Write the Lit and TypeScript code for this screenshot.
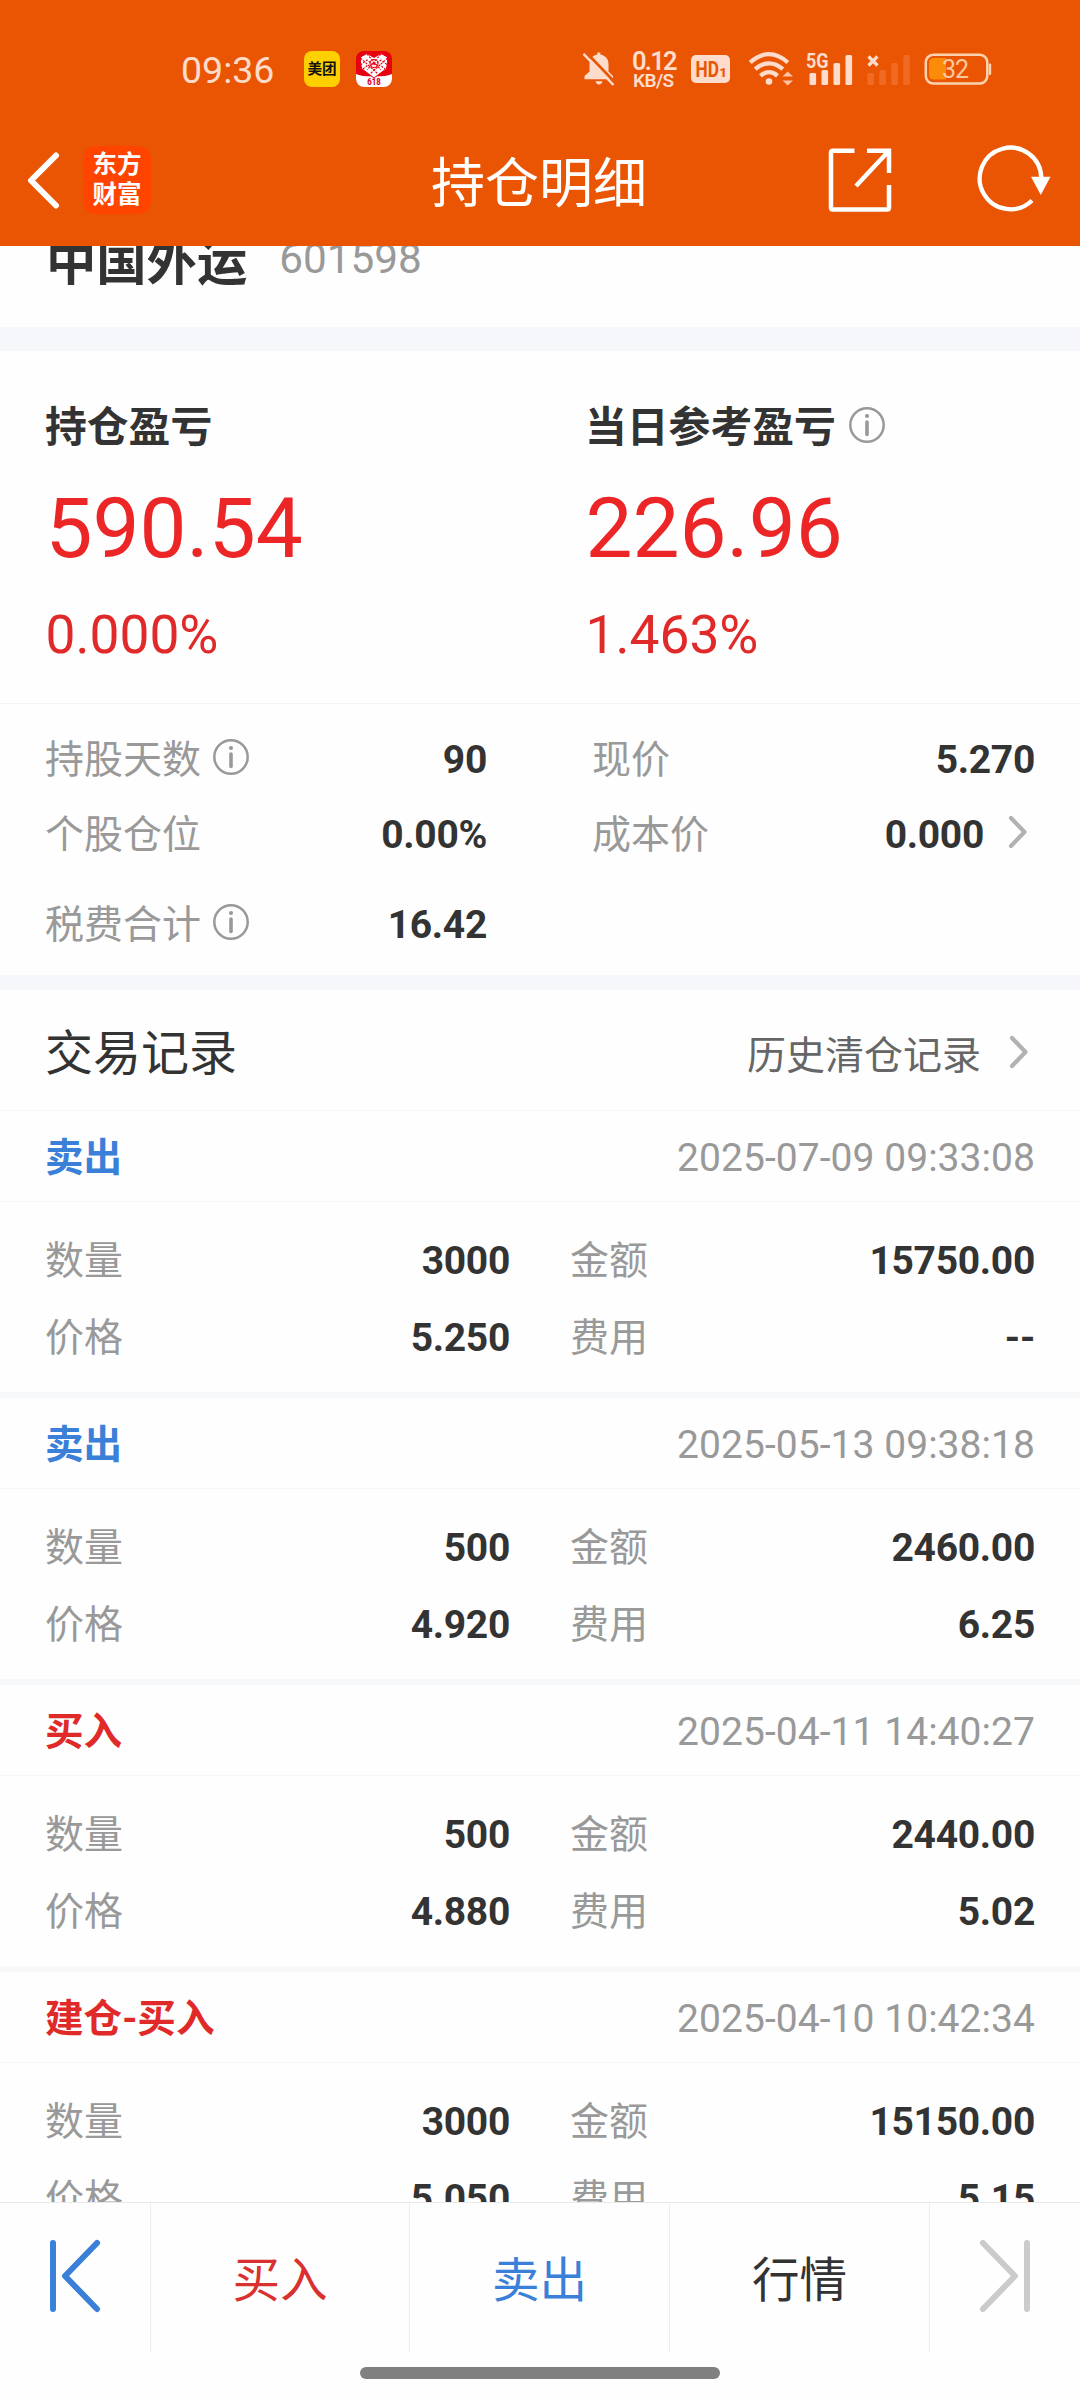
import { LitElement, html, css, svg, nothing } from "lit";
import { customElement, property } from "lit/decorators.js";

interface Trade {
  side: "buy" | "sell";
  label: string;
  time: string;
  quantity: string;
  amount: string;
  price: string;
  fee: string;
}

const TRADES: Trade[] = [
  { side: "sell", label: "卖出", time: "2025-07-09 09:33:08", quantity: "3000", amount: "15750.00", price: "5.250", fee: "--" },
  { side: "sell", label: "卖出", time: "2025-05-13 09:38:18", quantity: "500", amount: "2460.00", price: "4.920", fee: "6.25" },
  { side: "buy", label: "买入", time: "2025-04-11 14:40:27", quantity: "500", amount: "2440.00", price: "4.880", fee: "5.02" },
  { side: "buy", label: "建仓-买入", time: "2025-04-10 10:42:34", quantity: "3000", amount: "15150.00", price: "5.050", fee: "5.15" },
];

const infoIcon = html`<svg class="info" width="36" height="36" viewBox="0 0 36 36">
  <circle cx="18" cy="18" r="16.7" fill="none" stroke="#999" stroke-width="2.5" />
  <circle cx="18" cy="9" r="2.1" fill="#999" />
  <path d="M18 15V27.5" stroke="#999" stroke-width="3.6" stroke-linecap="round" />
</svg>`;

const chevron = html`<svg class="chevron" width="20" height="34" viewBox="0 0 20 34">
  <path d="M3 3L16.5 17L3 31" fill="none" stroke="#b2b2b2" stroke-width="4.2" stroke-linecap="round" stroke-linejoin="round" />
</svg>`;

@customElement("status-bar")
export class StatusBar extends LitElement {
  static styles = css`
    :host {
      display: flex;
      align-items: center;
      height: 112px;
      padding: 26px 88px 0 181px;
      box-sizing: border-box;
      color: #fddccb;
      font-family: Roboto, "Noto Sans CJK SC", sans-serif;
    }
    svg { display: block; flex: none; }
    .time { font-size: 37.5px; line-height: 40px; width: 93px; white-space: nowrap; padding-top: 1px; }
    .app { margin-left: 30px; }
    .app2 { margin-left: 16px; }
    .bell { margin-left: auto; }
    .speed {
      width: 43px;
      margin-left: 17px;
      font-weight: 600;
      padding-top: 4px;
      white-space: nowrap;
    }
    .rate { font-size: 25.5px; line-height: 20px; letter-spacing: -1.8px; margin-left: -1px; }
    .unit { font-size: 19px; line-height: 20px; letter-spacing: -0.6px; }
    .hd { margin-left: 15px; }
    .wifi { margin-left: 18px; }
    .sig { margin-left: 13px; }
    .sig2 { margin-left: 14px; }
    .bat { margin-left: 13px; }
  `;

  private bars(x: number) {
    return [18, 15, 8, 0].map((top, i) => svg`<rect x=${x + i * 12} y=${top + 3} width="6.6" height=${30 - top} rx="1.5" />`);
  }

  render() {
    return html`
      <div class="time">09:36</div>
      <svg class="app" width="36" height="36" viewBox="0 0 36 36">
        <rect width="36" height="36" rx="8" fill="#ffd000" />
        <text x="18" y="23.4" text-anchor="middle" font-size="14.6" font-weight="700" fill="#111" font-family="'Noto Sans CJK SC', sans-serif">美团</text>
      </svg>
      <svg class="app2" width="36" height="36" viewBox="0 0 36 36">
        <rect width="36" height="36" rx="8" fill="#e60012" />
        <path d="M0 23Q5 25.500 18 25.500Q31 25.500 36 23V28A8 8 0 0 1 28 36H8A8 8 0 0 1 0 28Z" fill="#fff" />
        <path d="M18 27L5.500 17.500Q4 12 4.500 6L11 2.500L18 6.500L25 2.500L31.500 6Q32 12 30.500 17.500Z" fill="#fff" stroke="#e60012" stroke-width="1" />
        <g fill="none" stroke="#e60012" stroke-width="1.100">
          <path d="M11 3L25 19M25 3L11 19M4.500 7L22 23M31.500 7L14 23M4.500 14L11 9L18 14L25 9L31.500 14M7 18L12 14L18 19L24 14L29 18" stroke-dasharray="2.200 1.200" />
          <circle cx="18" cy="12.500" r="4" />
        </g>
        <circle cx="18" cy="12.500" r="1.300" fill="#e60012" />
        <text x="18" y="34.200" text-anchor="middle" font-size="9.200" font-weight="800" fill="#d9001b" textLength="13.500" lengthAdjust="spacingAndGlyphs" font-family="Roboto, sans-serif">618</text>
      </svg>

      <svg class="bell" width="34" height="36" viewBox="0 0 34 36">
        <path d="M15.300 3.500V1.600H18.300V3.500C23.500 4.500 26.500 8 26.500 13V20.500L31 25V28.300H2.500V25L7.500 20.500V13C7.500 8 10.300 4.500 15.300 3.500Z" fill="#fddccb" />
        <path d="M13.500 30.300H20.500Q19.500 33.500 17 33.500Q14.500 33.500 13.500 30.300Z" fill="#fddccb" />
        <path d="M3.800 1L34 32.500" stroke="#ea5504" stroke-width="2.600" />
        <path d="M1.500 2.800L31.500 34" stroke="#fddccb" stroke-width="2.500" />
      </svg>
      <div class="speed"><div class="rate">0.12</div><div class="unit">KB/S</div></div>
      <svg class="hd" width="39" height="28" viewBox="0 0 39 28">
        <rect width="39" height="28" rx="5" fill="#fddccb" />
        <text x="4.500" y="22" font-size="22" font-weight="700" fill="#ea5504" textLength="23.500" lengthAdjust="spacingAndGlyphs" font-family="Roboto, sans-serif">HD</text>
        <text x="28.300" y="22" font-size="13.500" font-weight="800" fill="#ea5504" font-family="Roboto, sans-serif">1</text>
      </svg>
      <svg class="wifi" width="45" height="36" viewBox="0 0 45 36">
        <g fill="none" stroke="#fddccb" stroke-width="4.300">
          <path d="M2.200 11.500Q11.500 3.200 21 3.200Q30.500 3.200 39.800 11.500" />
          <path d="M7.200 18.200Q13.800 12.300 21 12.300Q28.200 12.300 34.800 18.200" />
          <path d="M12.500 24.800Q16.500 21.200 21 21.200Q25.500 21.200 29.500 24.800" />
        </g>
        <circle cx="21" cy="30.500" r="3.300" fill="#fddccb" />
        <path d="M34.500 25.500L39.700 20.500L45 25.500ZM34.500 29.500L39.700 34.500L45 29.500Z" fill="#fcc3a6" />
      </svg>
      <svg class="sig" width="47" height="34" viewBox="0 0 47 34">
        <text x="0" y="15.800" font-size="20" font-weight="700" fill="#fddccb" textLength="22.500" lengthAdjust="spacingAndGlyphs" font-family="Roboto, sans-serif">5G</text>
        <g fill="#fddccb">${this.bars(3.5)}</g>
      </svg>
      <svg class="sig2" width="44" height="34" viewBox="0 0 44 34">
        <path d="M1.500 4.500L10.500 13.500M10.500 4.500L1.500 13.500" stroke="#fddccb" stroke-width="3.200" />
        <g fill="#f16a23">${this.bars(0.3)}</g>
      </svg>
      <svg class="bat" width="68" height="34" viewBox="0 0 68 34">
        <rect x="1.800" y="2.800" width="61.500" height="28.800" rx="7.500" fill="none" stroke="#fcd3ae" stroke-width="2.500" />
        <path d="M5 11Q5 6 10 6H22V27.500H10Q5 27.500 5 23Z" fill="#fa8c0a" />
        <rect x="64.800" y="11.500" width="2.400" height="11.500" rx="1.200" fill="#fcd3ae" />
        <text x="31.500" y="26.200" text-anchor="middle" font-size="25" fill="#fcc99f" textLength="27" font-family="Roboto, sans-serif">32</text>
      </svg>
    `;
  }
}

@customElement("nav-bar")
export class NavBar extends LitElement {
  static styles = css`
    :host {
      display: grid;
      grid-template-columns: 1fr auto 1fr;
      align-items: center;
      height: 134px;
      padding: 0 28px 0 26px;
      color: #fff;
      font-family: Roboto, "Noto Sans CJK SC", sans-serif;
    }
    svg { display: block; }
    .left { display: flex; align-items: center; gap: 23px; padding-top: 1px; }
    .logo {
      width: 68px;
      height: 68px;
      border-radius: 13px;
      background: #ff4400;
      display: flex;
      flex-direction: column;
      align-items: center;
      justify-content: center;
      font: 700 24.5px/30px "Noto Sans CJK SC", sans-serif;
      box-sizing: border-box;
      padding-bottom: 3px;
    }
    .title { font-size: 54px; line-height: 60px; padding-top: 12px; }
    .right { display: flex; justify-content: flex-end; align-items: center; gap: 85px; padding-top: 1px; }
  `;

  render() {
    return html`
      <div class="left">
        <svg width="34" height="60" viewBox="0 0 34 60">
          <path d="M30 5.500L5 30.500L30 55.500" fill="none" stroke="#fff" stroke-width="6" stroke-linecap="round" stroke-linejoin="round" />
        </svg>
        <div class="logo"><span>东方</span><span>财富</span></div>
      </div>
      <div class="title">持仓明细</div>
      <div class="right">
        <svg width="64" height="66" viewBox="0 0 64 66" fill="none" stroke="#fff" stroke-width="4.500">
          <path d="M26.500 3.800H5Q3 3.800 3 5.800V60.500Q3 62.500 5 62.500H59Q61 62.500 61 60.500V38" />
          <path d="M39 3.800H61V26M60 4.800L28 39" />
        </svg>
        <svg width="75" height="70" viewBox="0 0 75 70">
          <path d="M55 55.500A30.800 30.800 0 1 1 64.300 33" fill="none" stroke="#fff" stroke-width="4.300" />
          <path d="M54 31.800H73.500L63.800 50Z" fill="#fff" />
        </svg>
      </div>
    `;
  }
}

@customElement("stat-row")
export class StatRow extends LitElement {
  static styles = css`
    :host {
      display: flex;
      align-items: center;
      height: 50px;
      font-size: 39px;
      line-height: 50px;
      white-space: nowrap;
    }
    svg { display: block; }
    .label { color: #999; }
    .info { margin: -6px 0 0 12px; }
    .value { margin-left: auto; color: #333; font-weight: 700; letter-spacing: -0.3px; }
    .chevron { margin: -6px 7px 0 24px; }
  `;
  @property() label = "";
  @property() value = "";
  @property({ type: Boolean }) info = false;
  @property({ type: Boolean }) more = false;

  render() {
    return html`
      <span class="label">${this.label}</span>
      ${this.info ? infoIcon : nothing}
      <span class="value">${this.value}</span>
      ${this.more ? chevron : nothing}
    `;
  }
}

@customElement("trade-record")
export class TradeRecord extends LitElement {
  static styles = css`
    :host { display: block; height: 281px; border-bottom: 6px solid #f6f8fa; }
    .head {
      display: flex;
      justify-content: space-between;
      align-items: center;
      height: 91px;
      padding: 3px 45px 0;
      box-sizing: border-box;
      border-bottom: 1px solid #f5f6f8;
      font-size: 39px;
      line-height: 50px;
    }
    .side { font-weight: 700; font-size: 38.6px; padding-top: 1px; }
    .buy { color: #e02a2a; }
    .sell { color: #3a80d9; }
    .time { color: #999; letter-spacing: 0.05px; }
    .body {
      display: grid;
      grid-template-columns: 465px 465px;
      column-gap: 60px;
      row-gap: 27px;
      padding: 34px 45px 0;
    }
  `;
  @property({ attribute: false }) trade!: Trade;

  render() {
    const t = this.trade;
    return html`
      <div class="head">
        <span class="side ${t.side}">${t.label}</span>
        <span class="time">${t.time}</span>
      </div>
      <div class="body">
        <stat-row label="数量" value=${t.quantity}></stat-row>
        <stat-row label="金额" value=${t.amount}></stat-row>
        <stat-row label="价格" value=${t.price}></stat-row>
        <stat-row label="费用" value=${t.fee}></stat-row>
      </div>
    `;
  }
}

@customElement("app-root")
export class AppRoot extends LitElement {
  static styles = css`
    :host {
      display: flex;
      flex-direction: column;
      width: 1080px;
      height: 2400px;
      overflow: hidden;
      background: #fefefe;
      color: #333;
      font-family: Roboto, "Noto Sans CJK SC", sans-serif;
    }
    svg { display: block; flex: none; }
    header { background: #ea5504; height: 246px; flex: none; }
    main { flex: 1; min-height: 0; overflow: hidden; }
    .stock {
      display: flex;
      align-items: center;
      gap: 32px;
      height: 130px;
      margin-top: -49px;
      padding: 0 46px;
      box-sizing: border-box;
    }
    .name { font-size: 50.3px; font-weight: 700; padding-bottom: 9px; }
    .code { font-size: 42.3px; color: #999; padding-bottom: 8px; }
    .band { height: 24px; background: #f6f7fa; }
    .thin { height: 15px; }
    .profit {
      display: grid;
      grid-template-columns: 540px 1fr;
      height: 353px;
      padding: 47px 0 0 46px;
      box-sizing: border-box;
      border-bottom: 1px solid #f3f4f6;
    }
    .caption { display: flex; align-items: center; font-size: 41.8px; font-weight: 700; line-height: 60px; margin-left: -1px; }
    .caption .info { margin: -7px 0 0 13px; }
    .big { font-size: 83.7px; line-height: 100px; color: #ec2626; margin: 20px 0 0 -0.5px; }
    .pct { font-size: 53.3px; line-height: 70px; color: #e02a2a; margin: 22px 0 0 -0.5px; }
    .detail {
      display: grid;
      grid-template-columns: 442px 443px;
      grid-template-rows: 50px 50px 50px;
      column-gap: 105px;
      padding: 31px 44px 0 45px;
      row-gap: 25px;
      height: 271px;
      box-sizing: border-box;
    }
    .detail .tax { margin-top: 15px; }
    .log {
      display: flex;
      align-items: center;
      height: 121px;
      padding: 0 51px 0 45px;
      box-sizing: border-box;
      border-bottom: 1px solid #f5f6f8;
    }
    .logname { font-size: 48px; padding-bottom: 3px; }
    .history { margin-left: auto; font-size: 39px; color: #666; padding-top: 3px; }
    .log .chevron { margin: 3px 0 0 28px; }
    footer {
      flex: none;
      display: flex;
      height: 198px;
      border-top: 1px solid #e9e9e9;
      box-sizing: border-box;
      flex-direction: column;
      align-items: center;
    }
    .tabs { display: grid; grid-template-columns: 151px 259px 260px 260px 150px; width: 1080px; height: 149px; }
    .tab {
      display: flex;
      align-items: center;
      justify-content: center;
      border-right: 1px solid #ededed;
      font-size: 47.6px;
      box-sizing: border-box;
      padding-bottom: 3px;
    }
    .tab:last-child { border-right: 0; }
    .icon { padding-bottom: 4px; }
    .buy { color: #d93030; }
    .sell { color: #3a80d9; }
    .home { width: 360px; height: 12px; border-radius: 6px; background: #808080; margin-top: 15px; }
  `;

  render() {
    return html`
      <header>
        <status-bar></status-bar>
        <nav-bar></nav-bar>
      </header>
      <main>
        <div class="stock"><span class="name">中国外运</span><span class="code">601598</span></div>
        <div class="band"></div>
        <section class="profit">
          <div>
            <div class="caption">持仓盈亏</div>
            <div class="big">590.54</div>
            <div class="pct">0.000%</div>
          </div>
          <div>
            <div class="caption">当日参考盈亏${infoIcon}</div>
            <div class="big">226.96</div>
            <div class="pct">1.463%</div>
          </div>
        </section>
        <section class="detail">
          <stat-row label="持股天数" value="90" info></stat-row>
          <stat-row label="现价" value="5.270"></stat-row>
          <stat-row label="个股仓位" value="0.00%"></stat-row>
          <stat-row label="成本价" value="0.000" more></stat-row>
          <stat-row class="tax" label="税费合计" value="16.42" info></stat-row>
        </section>
        <div class="band thin"></div>
        <div class="log">
          <span class="logname">交易记录</span>
          <span class="history">历史清仓记录</span>
          ${chevron}
        </div>
        ${TRADES.map((t) => html`<trade-record .trade=${t}></trade-record>`)}
      </main>
      <footer>
        <div class="tabs">
          <div class="tab icon">
            <svg width="54" height="74" viewBox="0 0 54 74" fill="none" stroke="#3a80d9" stroke-width="6" stroke-linecap="round" stroke-linejoin="round">
              <path d="M5 4V70M49 4L17 37L49 70" />
            </svg>
          </div>
          <div class="tab buy">买入</div>
          <div class="tab sell">卖出</div>
          <div class="tab">行情</div>
          <div class="tab icon">
            <svg width="54" height="74" viewBox="0 0 54 74" fill="none" stroke="#cbcbcb" stroke-width="6" stroke-linecap="round" stroke-linejoin="round">
              <path d="M49 4V70M5 4L37 37L5 70" />
            </svg>
          </div>
        </div>
        <div class="home"></div>
      </footer>
    `;
  }
}
